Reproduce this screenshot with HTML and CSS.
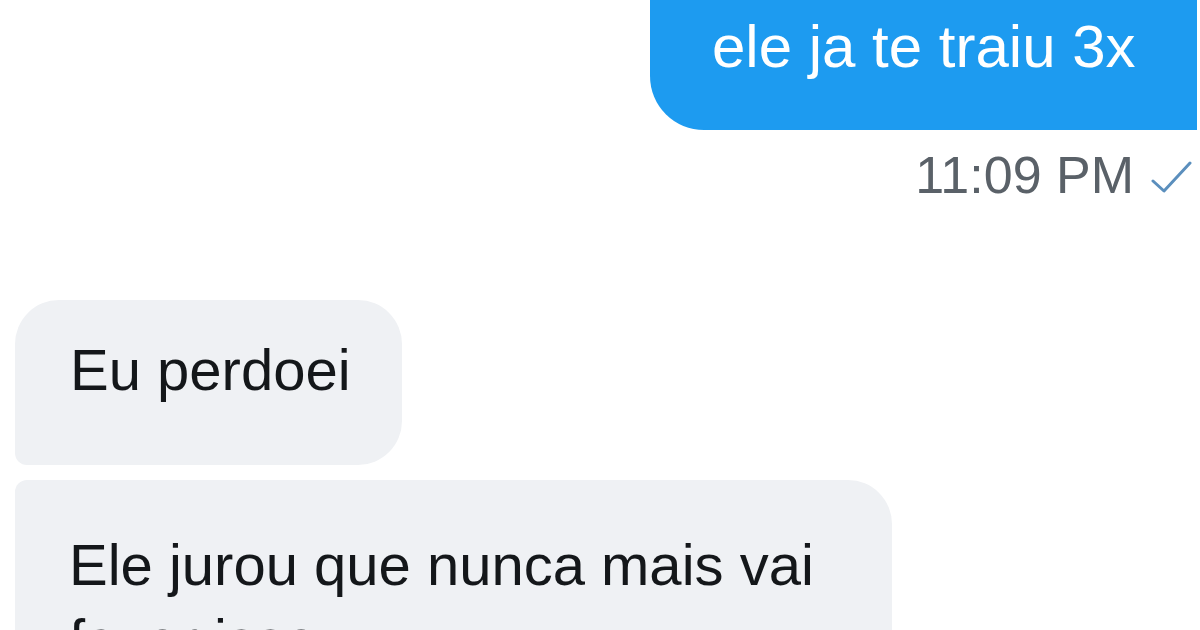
FILE: index.html
```html
<!DOCTYPE html>
<html lang="pt">
<head>
<meta charset="utf-8">
<title>DM</title>
<link rel="stylesheet" href="styles.css">
</head>
<body>
<div class="chat">
  <div class="msg sent">ele ja te traiu 3x</div>
  <div class="meta">
    <span class="time">11:09 PM</span>
    <svg class="check" width="42" height="34" viewBox="0 0 42 34" aria-hidden="true">
      <path d="M3 22 L14 32 L40 4" fill="none" stroke="#5b8fbd" stroke-width="3" stroke-linecap="round" stroke-linejoin="round"/>
    </svg>
  </div>
  <div class="msg recv first">Eu perdoei</div>
  <div class="msg recv second">Ele jurou que nunca mais vai fazer isso</div>
</div>
</body>
</html>
```

FILE: styles.css
```css
* { box-sizing: border-box; }
html, body {
  margin: 0;
  padding: 0;
  background: #ffffff;
  width: 1200px;
  height: 630px;
  overflow: hidden;
}
body {
  font-family: "Liberation Sans", Arial, Helvetica, sans-serif;
}
.chat {
  display: flex;
  flex-direction: column;
}
.msg {
  font-size: 58px;
}
.sent {
  align-self: flex-end;
  width: 547px;
  height: 130px;
  margin-right: 3px;
  padding: 12px 0 0 62px;
  font-size: 60px;
  line-height: 69px;
  color: #ffffff;
  background: #1d9bf0;
  border-radius: 0 0 0 54px;
}
.meta {
  display: flex;
  align-items: center;
  justify-content: flex-end;
  gap: 16px;
  margin-top: 15px;
  padding-right: 8px;
  height: 60px;
}
.time {
  font-size: 52px;
  line-height: 60px;
  color: #5a6168;
}
.check {
  display: block;
  margin-top: 2px;
}
.recv {
  align-self: flex-start;
  margin-left: 15px;
  color: #14171a;
  background: #eff1f4;
}
.first {
  width: 387px;
  height: 165px;
  margin-top: 95px;
  padding: 36px 0 0 55px;
  line-height: 67px;
  border-radius: 44px 44px 44px 12px;
}
.second {
  width: 877px;
  margin-top: 15px;
  padding: 47px 54px 40px 54px;
  line-height: 75px;
  border-radius: 12px 44px 44px 44px;
}
```
